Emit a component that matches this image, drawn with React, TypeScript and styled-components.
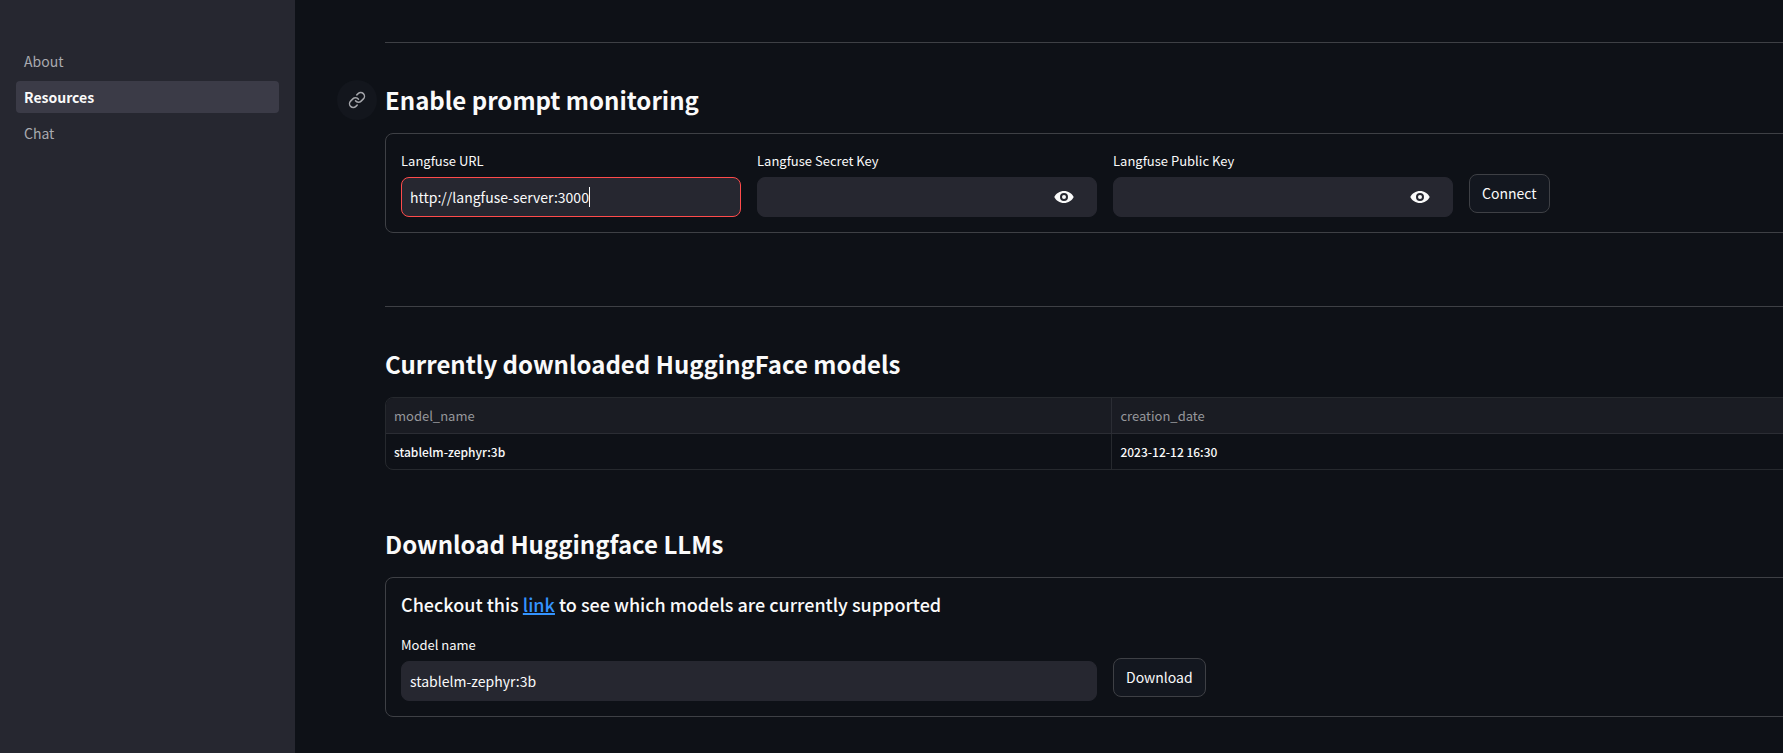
import React, { useState } from "react";
import styled, { createGlobalStyle, css } from "styled-components";
import { Link as LinkIcon } from "lucide-react";

const GlobalStyle = createGlobalStyle`
  *, *::before, *::after { box-sizing: border-box; }
  html, body, #root { height: 100%; }
  body {
    margin: 0;
    background: #0e1117;
    color: #fafafa;
    font-family: "Noto Sans CJK SC", "Noto Sans", sans-serif;
    font-size: 14px;
  }
  button, input { font: inherit; color: inherit; }
`;

const Page = styled.div`
  display: flex;
  min-height: 100%;
`;

const Sidebar = styled.nav`
  flex: 0 0 295px;
  padding: 45px 16px 16px;
  background: #262730;
`;

const NavList = styled.ul`
  display: flex;
  flex-direction: column;
  gap: 4px;
  margin: 0;
  padding: 0;
  list-style: none;
`;

const NavLink = styled.a<{ $active?: boolean }>`
  display: block;
  padding: 0 8px;
  border-radius: 4px;
  line-height: 32px;
  text-decoration: none;
  color: #a9aaaf;
  ${(p) =>
    p.$active &&
    css`
      background: #3b3b47;
      color: #fafafa;
      font-weight: 700;
    `}
`;

const Main = styled.main`
  flex: 1;
  min-width: 0;
  overflow: hidden;
  padding: 42px 0 35px 90px;
`;

/* The wide layout runs a little past the right edge of the window. */
const Content = styled.div`
  display: flex;
  flex-direction: column;
  margin-right: -42px;
`;

const Divider = styled.hr`
  width: 100%;
  height: 1px;
  margin: 0 0 38px;
  border: 0;
  background: #3e4045;
`;

const Section = styled.section<{ $space?: number }>`
  display: flex;
  flex-direction: column;
  gap: 14px;
  padding-bottom: ${(p) => p.$space ?? 0}px;
`;

const SectionHead = styled.div`
  display: flex;
  align-items: center;
  gap: 8px;
  height: 38px;
`;

const Anchor = styled.a`
  display: flex;
  align-items: center;
  justify-content: center;
  width: 40px;
  height: 40px;
  margin-left: -48px;
  border-radius: 50%;
  background: #13161d;
  color: #a3a4a9;
`;

const Title = styled.h3`
  margin: 0;
  font-size: 24px;
  font-weight: 700;
  line-height: 32px;
`;

const Form = styled.form`
  display: flex;
  flex-direction: column;
  gap: 18px;
  padding: 15px;
  border: 1px solid #3e4045;
  border-radius: 8px;
`;

const Columns = styled.div<{ $count: number }>`
  display: grid;
  grid-template-columns: repeat(${(p) => p.$count}, 1fr);
  gap: 16px;
`;

const Field = styled.div`
  display: flex;
  flex-direction: column;
  gap: 4px;
`;

const Label = styled.label`
  font-size: 13px;
  line-height: 24px;
`;

const InputBox = styled.div<{ $focused?: boolean }>`
  display: flex;
  align-items: center;
  height: 40px;
  padding: 0 8px;
  border: 1px solid ${(p) => (p.$focused ? "#ff4b4b" : "#262730")};
  border-radius: 8px;
  background: #262730;
`;

const Input = styled.input<{ $fit?: boolean }>`
  flex: ${(p) => (p.$fit ? "0 1 auto" : "1")};
  min-width: 0;
  padding: 0;
  border: 0;
  outline: 0;
  background: transparent;
  line-height: 24px;
  ${(p) => p.$fit && "field-sizing: content; caret-color: transparent;"}
`;

const Caret = styled.span`
  width: 1px;
  height: 20px;
  background: #fafafa;
`;

const RevealButton = styled.button`
  display: flex;
  padding: 0;
  margin-right: 14px;
  border: 0;
  background: transparent;
  cursor: pointer;
`;

const SubmitCell = styled.div`
  padding-top: 25px;
`;

const SubmitButton = styled.button`
  height: 39px;
  padding: 0 12px 2px;
  border: 1px solid #3e4045;
  border-radius: 8px;
  background: #13171f;
  line-height: 24px;
  cursor: pointer;
`;

const TableFrame = styled.div`
  overflow: hidden;
  border: 1px solid #26292e;
  border-radius: 8px;
`;

const Table = styled.table`
  width: 100%;
  border-collapse: collapse;
  table-layout: fixed;
  line-height: 35px;
  text-align: left;
`;

const HeadCell = styled.th<{ $first?: boolean }>`
  width: ${(p) => (p.$first ? "50.5%" : "auto")};
  padding: 0 8px;
  border-right: 1px solid #2b2d34;
  border-bottom: 1px solid #2b2d34;
  background: #1a1c23;
  color: #96979b;
  font-size: 13px;
  font-weight: 400;
`;

const Cell = styled.td`
  padding: 0 8px;
  border-right: 1px solid #26292e;
  font-size: 12px;
  font-weight: 500;
`;

const Note = styled.h5`
  margin: 0;
  font-size: 18px;
  font-weight: 500;
  line-height: 22px;
`;

const NoteLink = styled.a`
  color: #3494ff;
  text-decoration: underline;
  text-decoration-thickness: 2px;
`;

const EyeIcon = () => (
  <svg width="20" height="14" viewBox="0 0 20 14" aria-hidden="true">
    <path
      fill="#fafafa"
      fillRule="evenodd"
      d="M10 1C5.8 1 2 3.5 0.3 7C2 10.5 5.8 13 10 13S18 10.5 19.7 7C18 3.5 14.2 1 10 1ZM10 11A4 4 0 1 1 10 3A4 4 0 0 1 10 11ZM10 9A2 2 0 1 0 10 5A2 2 0 0 0 10 9Z"
    />
  </svg>
);

const SecretField = ({ id, label }: { id: string; label: string }) => {
  const [visible, setVisible] = useState(false);
  return (
    <Field>
      <Label htmlFor={id}>{label}</Label>
      <InputBox>
        <Input id={id} type={visible ? "text" : "password"} />
        <RevealButton
          type="button"
          aria-label={`Show ${label}`}
          onClick={() => setVisible(!visible)}
        >
          <EyeIcon />
        </RevealButton>
      </InputBox>
    </Field>
  );
};

const pages = ["About", "Resources", "Chat"];
const models = [{ name: "stablelm-zephyr:3b", created: "2023-12-12 16:30" }];

export default function App() {
  return (
    <>
      <GlobalStyle />
      <Page>
        <Sidebar>
          <NavList>
            {pages.map((page) => (
              <li key={page}>
                <NavLink href={`#${page}`} $active={page === "Resources"}>
                  {page}
                </NavLink>
              </li>
            ))}
          </NavList>
        </Sidebar>
        <Main>
          <Content>
            <Divider />
            <Section $space={73}>
              <SectionHead>
                <Anchor href="#monitoring" aria-label="Link to this section">
                  <LinkIcon size={18} />
                </Anchor>
                <Title id="monitoring">Enable prompt monitoring</Title>
              </SectionHead>
              <Form onSubmit={(e) => e.preventDefault()}>
                <Columns $count={4}>
                  <Field>
                    <Label htmlFor="url">Langfuse URL</Label>
                    <InputBox $focused>
                      <Input id="url" $fit defaultValue="http://langfuse-server:3000" />
                      <Caret />
                    </InputBox>
                  </Field>
                  <SecretField id="secret" label="Langfuse Secret Key" />
                  <SecretField id="public" label="Langfuse Public Key" />
                  <SubmitCell>
                    <SubmitButton type="submit">Connect</SubmitButton>
                  </SubmitCell>
                </Columns>
              </Form>
            </Section>
            <Divider />
            <Section $space={55}>
              <SectionHead>
                <Title>Currently downloaded HuggingFace models</Title>
              </SectionHead>
              <TableFrame>
                <Table>
                  <thead>
                    <tr>
                      <HeadCell $first>model_name</HeadCell>
                      <HeadCell>creation_date</HeadCell>
                    </tr>
                  </thead>
                  <tbody>
                    {models.map((model) => (
                      <tr key={model.name}>
                        <Cell>{model.name}</Cell>
                        <Cell>{model.created}</Cell>
                      </tr>
                    ))}
                  </tbody>
                </Table>
              </TableFrame>
            </Section>
            <Section>
              <SectionHead>
                <Title>Download Huggingface LLMs</Title>
              </SectionHead>
              <Form onSubmit={(e) => e.preventDefault()}>
                <Note>
                  Checkout this <NoteLink href="#models">link</NoteLink> to see which models are
                  currently supported
                </Note>
                <Columns $count={2}>
                  <Field>
                    <Label htmlFor="model">Model name</Label>
                    <InputBox>
                      <Input id="model" defaultValue="stablelm-zephyr:3b" />
                    </InputBox>
                  </Field>
                  <SubmitCell>
                    <SubmitButton type="submit">Download</SubmitButton>
                  </SubmitCell>
                </Columns>
              </Form>
            </Section>
          </Content>
        </Main>
      </Page>
    </>
  );
}
